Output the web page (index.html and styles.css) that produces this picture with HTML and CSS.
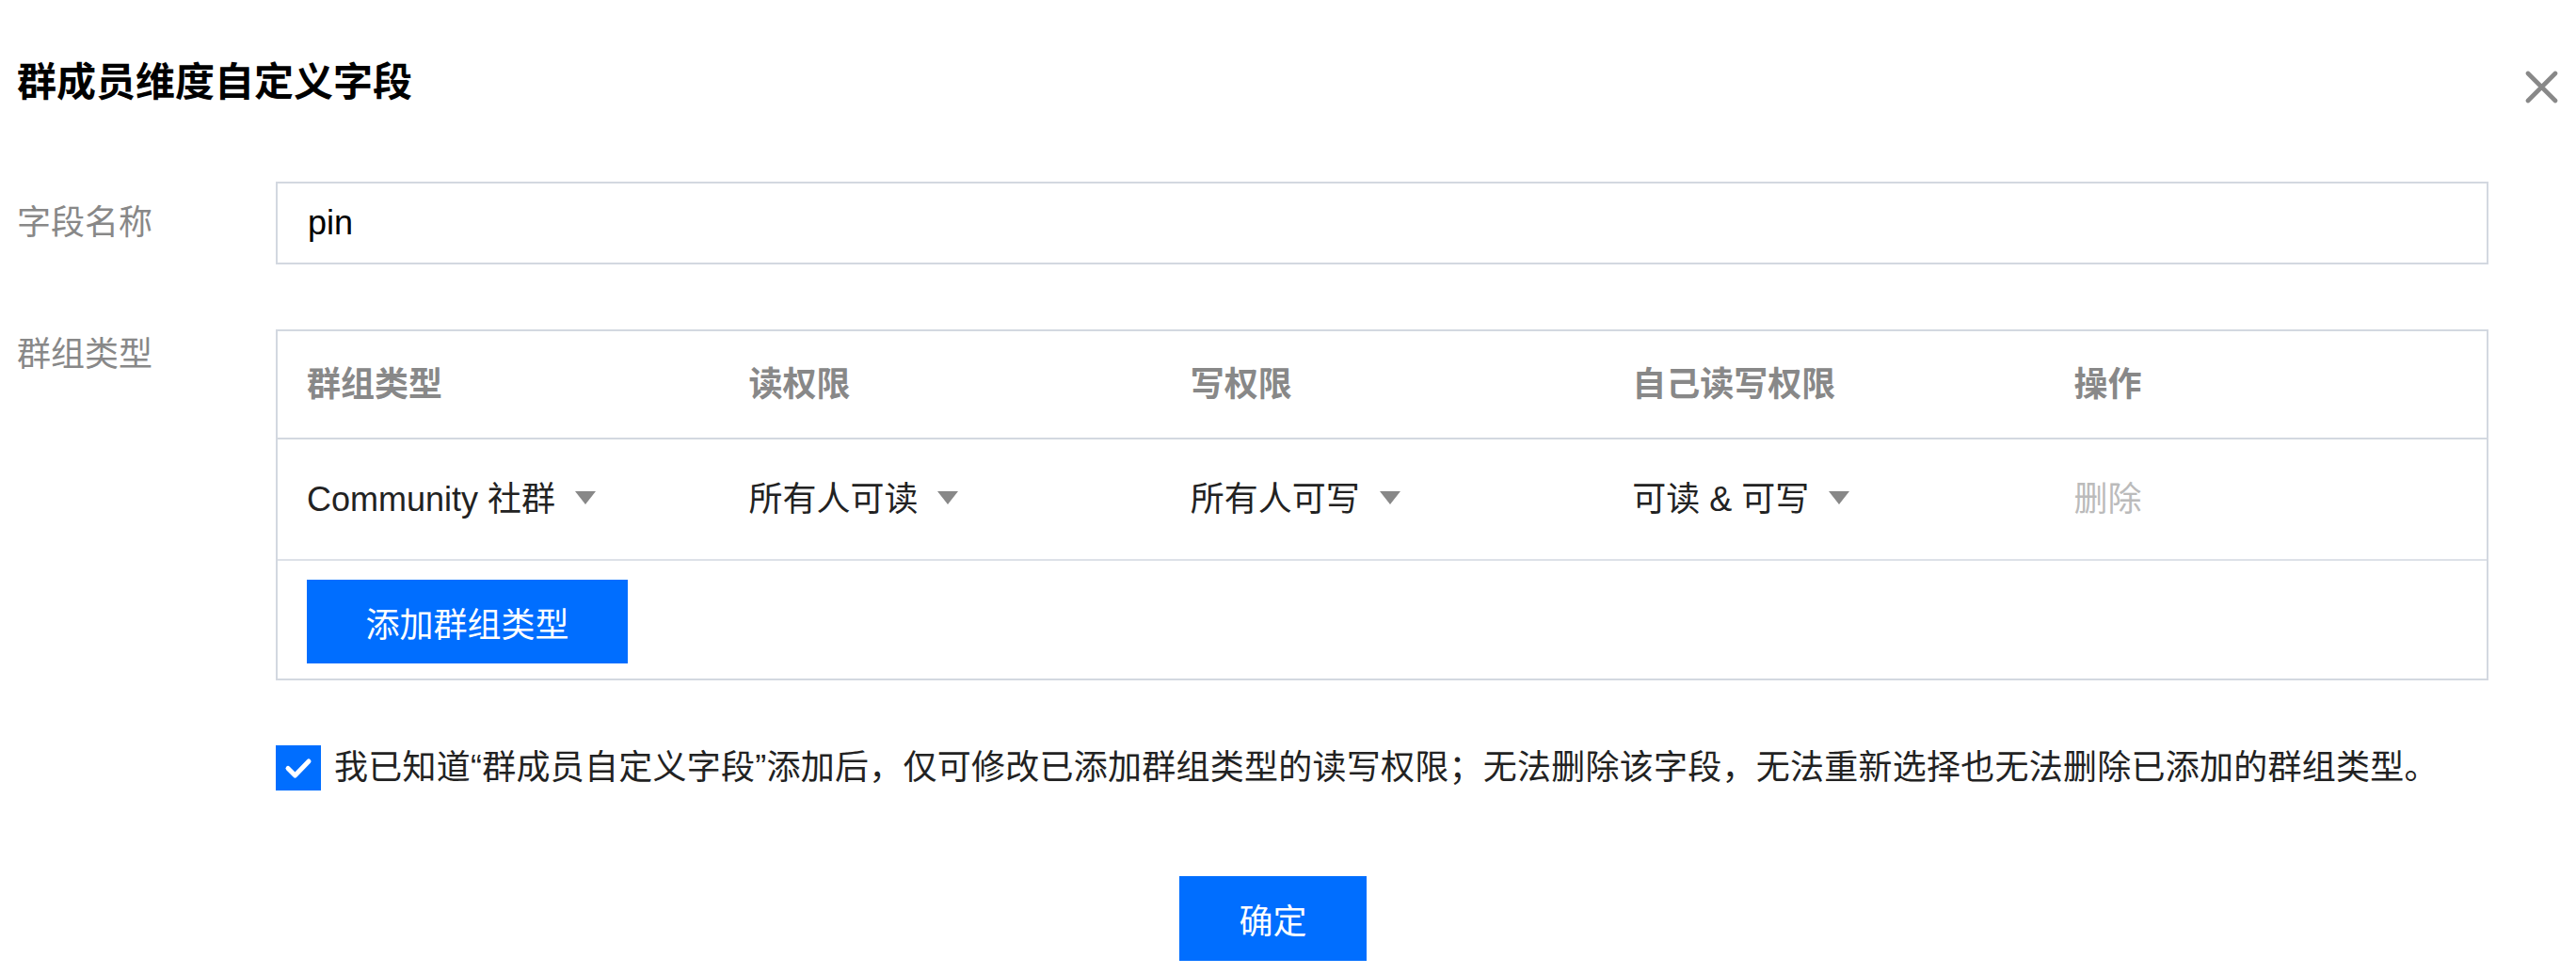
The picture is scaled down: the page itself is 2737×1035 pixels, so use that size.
FILE: index.html
```html
<!DOCTYPE html>
<html lang="zh-CN">
  <head>
    <meta charset="UTF-8" />
    <meta name="viewport" content="width=device-width, initial-scale=1.0" />
    <title>群成员维度自定义字段</title>
    <link rel="stylesheet" href="styles.css">
  </head>
  <body>
    <div class="dialog">
      <!-- Header -->
      <div class="dialog-header">
        <h2 class="dialog-title">群成员维度自定义字段</h2>
        <button class="dialog-close" aria-label="关闭">
          <svg width="35" height="35" viewBox="0 0 35 35">
            <path d="M3 3L32 32M32 3L3 32" stroke="#888" stroke-width="4.6" stroke-linecap="round" fill="none" />
          </svg>
        </button>
      </div>

      <!-- Form -->
      <div class="form">
        <div class="form-item">
          <div class="form-label">字段名称</div>
          <div class="form-control">
            <div class="input">pin</div>
          </div>
        </div>

        <div class="form-item form-item-top">
          <div class="form-label">群组类型</div>
          <div class="form-control">
            <div class="table-wrap">
              <table class="group-table">
                <thead>
                  <tr>
                    <th>群组类型</th>
                    <th>读权限</th>
                    <th>写权限</th>
                    <th>自己读写权限</th>
                    <th>操作</th>
                  </tr>
                </thead>
                <tbody>
                  <tr>
                    <td><span class="dropdown">Community 社群<i class="caret"></i></span></td>
                    <td><span class="dropdown">所有人可读<i class="caret"></i></span></td>
                    <td><span class="dropdown">所有人可写<i class="caret"></i></span></td>
                    <td><span class="dropdown">可读 &amp; 可写<i class="caret"></i></span></td>
                    <td><span class="link-disabled">删除</span></td>
                  </tr>
                  <tr class="add-row">
                    <td colspan="5"><button class="btn btn-primary btn-add">添加群组类型</button></td>
                  </tr>
                </tbody>
              </table>
            </div>
          </div>
        </div>

        <div class="form-item">
          <div class="form-label"></div>
          <div class="form-control">
            <label class="checkbox">
              <span class="checkbox-box">
                <svg width="48" height="48" viewBox="0 0 48 48">
                  <path d="M13 24.5l7.5 7.5L35 17" stroke="#fff" stroke-width="5" stroke-linecap="round" stroke-linejoin="round" fill="none" />
                </svg>
              </span>
              <span class="checkbox-text">我已知道“群成员自定义字段”添加后，仅可修改已添加群组类型的读写权限；无法删除该字段，无法重新选择也无法删除已添加的群组类型。</span>
            </label>
          </div>
        </div>
      </div>

      <!-- Footer -->
      <div class="dialog-footer">
        <button class="btn btn-primary btn-ok">确定</button>
      </div>
    </div>
  </body>
</html>
```

FILE: styles.css
```css
* {
  margin: 0;
  padding: 0;
  box-sizing: border-box;
  font-family: "Liberation Sans", "Noto Sans CJK SC", sans-serif;
}

body {
  background-color: #fff;
  color: #222;
  font-size: 36px;
}

.dialog {
  padding: 63px 19px 0 18px;
}

/* Header */
.dialog-header {
  display: flex;
  justify-content: space-between;
  align-items: center;
  height: 50px;
}

.dialog-title {
  font-size: 42px;
  font-weight: 700;
  color: #000;
  line-height: 50px;
}

.dialog-close {
  display: flex;
  background: none;
  border: none;
  margin-top: 8px;
  cursor: pointer;
}

/* Form */
.form {
  padding-right: 74px;
  margin-top: 80px;
}

.form-item {
  display: flex;
  align-items: center;
  margin-bottom: 69px;
}

.form-item:last-child {
  margin-bottom: 0;
}

.form-item-top {
  align-items: flex-start;
}

.form-label {
  width: 275px;
  flex-shrink: 0;
  color: #888;
  line-height: 54px;
}

.form-control {
  flex-grow: 1;
}

.input {
  height: 88px;
  border: 2px solid #d3d8e0;
  padding: 0 32px;
  line-height: 84px;
  color: #000;
}

/* Table */
.table-wrap {
  border: 2px solid #d3d8e0;
}

.group-table {
  width: 100%;
  border-collapse: collapse;
  table-layout: fixed;
}

.group-table th {
  text-align: left;
  font-weight: 700;
  color: #888;
  line-height: 54px;
  padding: 30px 31px 29px;
  border-bottom: 2px solid #d3d8e0;
}

.group-table td {
  line-height: 54px;
  padding: 37px 31px 36px;
  border-bottom: 2px solid #dde1e8;
  white-space: nowrap;
}

.group-table .add-row td {
  padding: 20px 31px 16px;
  border-bottom: none;
}

.dropdown {
  display: inline-flex;
  align-items: center;
  gap: 21px;
  color: #222;
  cursor: pointer;
}

.caret {
  width: 0;
  height: 0;
  border-left: 11px solid transparent;
  border-right: 11px solid transparent;
  border-top: 14px solid #888;
  margin-top: -4px;
}

.link-disabled {
  color: #bbb;
}

/* Buttons */
.btn {
  border: none;
  cursor: pointer;
  font-size: 36px;
}

.btn-primary {
  background-color: #006eff;
  color: #fff;
}

.btn-add {
  display: block;
  width: 341px;
  height: 89px;
}

.btn-ok {
  width: 199px;
  height: 90px;
}

/* Checkbox */
.checkbox {
  display: flex;
  align-items: center;
  gap: 14px;
  color: #222;
  line-height: 48px;
}

.checkbox-text {
  letter-spacing: 0.25px;
}

.checkbox-box {
  width: 48px;
  height: 48px;
  display: flex;
  background-color: #006eff;
}

/* Footer */
.dialog-footer {
  display: flex;
  justify-content: center;
  padding-right: 31px;
  margin-top: 91px;
}
```
